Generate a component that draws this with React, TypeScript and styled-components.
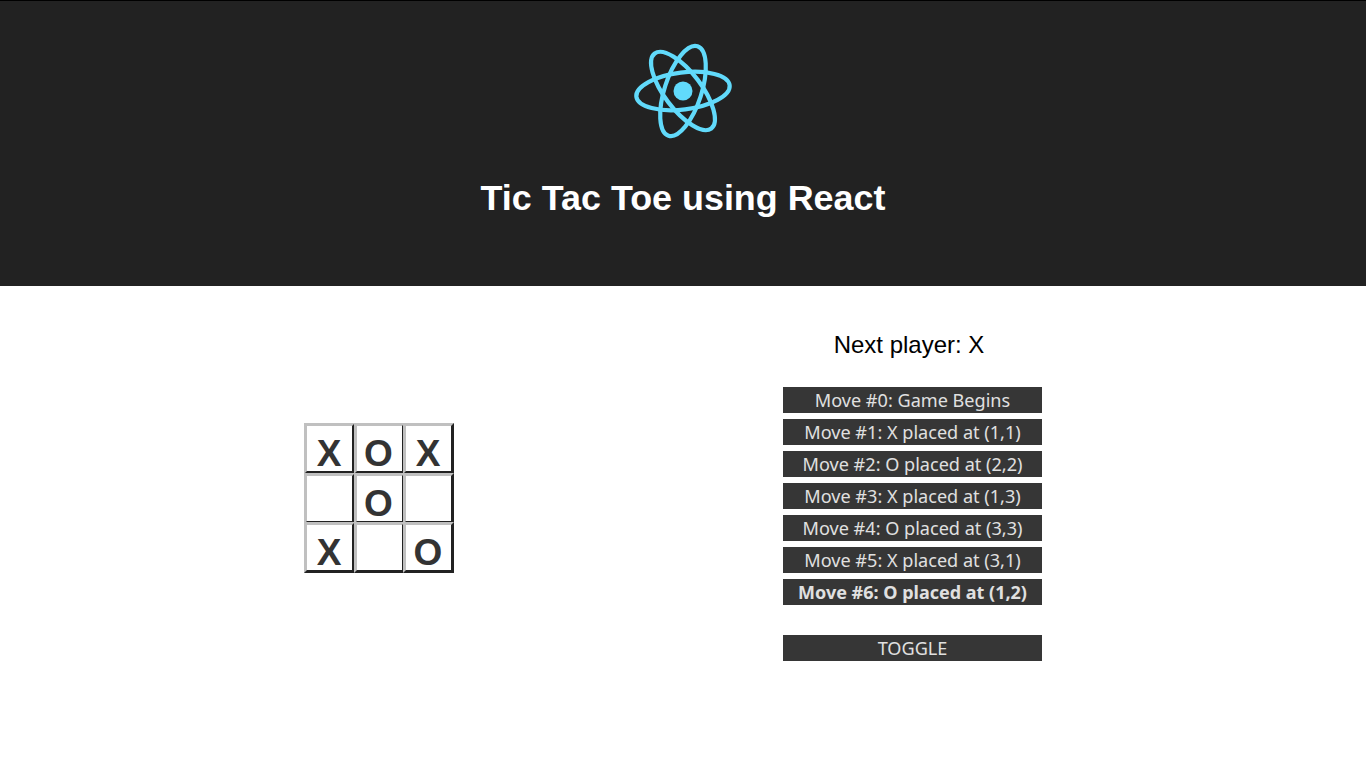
import React from 'react';
import styled, { createGlobalStyle } from 'styled-components';

const Global = createGlobalStyle`
  html, body { margin: 0; padding: 0; background: #fff; }
  body { font-family: "Liberation Sans", Arial, sans-serif; }
`;

const Page = styled.div`
  width: 1366px;
  min-height: 768px;
`;

const Header = styled.header`
  height: 286px;
  box-sizing: border-box;
  border-top: 1px solid #000;
  background: #222;
  display: flex;
  flex-direction: column;
  align-items: center;
`;

const Logo = styled.svg`
  width: 100px;
  height: 100px;
  margin-top: 40px;
  display: block;
`;

const Title = styled.h1`
  margin: 37px 0 0;
  font-size: 35.9px;
  line-height: 41px;
  font-weight: 700;
  color: #fff;
`;

const Main = styled.main`
  display: grid;
  grid-template-columns: 758px 1fr;
`;

const BoardColumn = styled.div`
  padding: 137px 0 0 304px;
`;

const Board = styled.div`
  width: 150px;
  height: 150px;
  display: grid;
  grid-template-columns: repeat(3, 49.5px);
  grid-auto-rows: 49.5px;
`;

const Square = styled.button`
  box-sizing: border-box;
  width: 51px;
  height: 51px;
  padding: 10px 1px 0 0;
  margin: 0;
  background: #fff;
  border-style: solid;
  border-width: 3px;
  border-color: #c0c0c0 #222 #222 #c0c0c0;
  font-family: "Liberation Sans", sans-serif;
  font-size: 37px;
  line-height: 35px;
  font-weight: 700;
  color: #333;
`;

const InfoColumn = styled.div`
  padding: 44px 0 0 25px;
  width: 259px;
`;

const Status = styled.div`
  width: 252px;
  text-align: center;
  font-size: 24px;
  line-height: 30px;
  color: #000;
`;

const Moves = styled.ol`
  list-style: none;
  margin: 27px 0 0;
  padding: 0;
  display: flex;
  flex-direction: column;
  gap: 6px;
`;

const MoveButton = styled.button<{ $current?: boolean }>`
  display: block;
  box-sizing: border-box;
  width: 259px;
  height: 26px;
  padding: 0;
  border: 0;
  background: #363636;
  color: #e0e0e0;
  font-family: "Noto Sans", sans-serif;
  font-size: ${p => (p.$current ? '18px' : '18.1px')};
  line-height: 26px;
  font-weight: ${p => (p.$current ? 700 : 400)};
  text-align: center;
`;

const Toggle = styled(MoveButton)`
  margin-top: 30px;
`;

const marks = ['X', 'O', 'X', '', 'O', '', 'X', '', 'O'];
const moves = [
  'Move #0: Game Begins',
  'Move #1: X placed at (1,1)',
  'Move #2: O placed at (2,2)',
  'Move #3: X placed at (1,3)',
  'Move #4: O placed at (3,3)',
  'Move #5: X placed at (3,1)',
  'Move #6: O placed at (1,2)',
];

export default function App() {
  return (
    <Page>
      <Global />
      <Header>
        <Logo viewBox="-50 -50 100 100" fill="none" stroke="#61dafb" strokeWidth="4.2">
          <ellipse cx="0" cy="0" rx="47" ry="18.5" transform="rotate(-7)" />
          <ellipse cx="0" cy="0" rx="47" ry="18.5" transform="rotate(53)" />
          <ellipse cx="0" cy="0" rx="47" ry="18.5" transform="rotate(108)" />
          <circle cx="0" cy="0" r="9.5" fill="#61dafb" stroke="none" />
        </Logo>
        <Title>Tic Tac Toe using React</Title>
      </Header>
      <Main>
        <BoardColumn>
          <Board>
            {marks.map((m, i) => (
              <Square key={i}>{m}</Square>
            ))}
          </Board>
        </BoardColumn>
        <InfoColumn>
          <Status>Next player: X</Status>
          <Moves>
            {moves.map((m, i) => (
              <li key={m}>
                <MoveButton $current={i === moves.length - 1}>{m}</MoveButton>
              </li>
            ))}
          </Moves>
          <Toggle>TOGGLE</Toggle>
        </InfoColumn>
      </Main>
    </Page>
  );
}
